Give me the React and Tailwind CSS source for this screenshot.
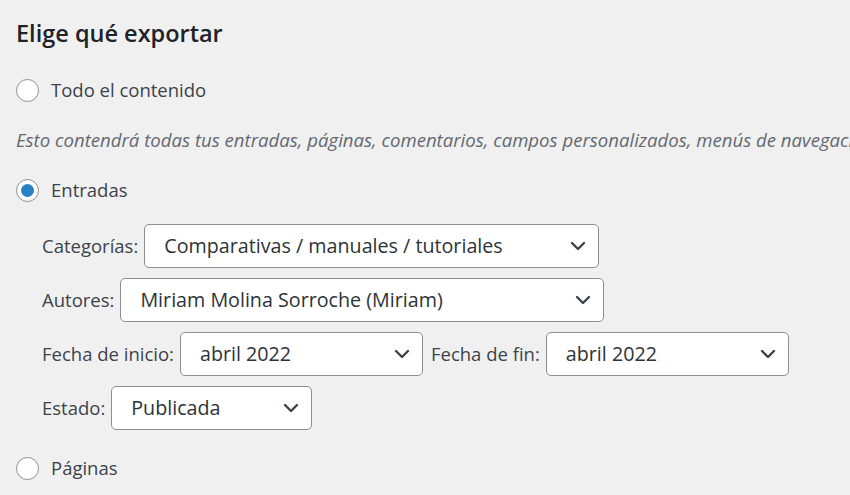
import React from "react";

function Chevron() {
  return (
    <svg width="16" height="10" viewBox="0 0 16 10" className="shrink-0">
      <path d="M2 2 L8 8 L14 2" fill="none" stroke="#3c434a" strokeWidth="2.4" strokeLinecap="round" strokeLinejoin="round" />
    </svg>
  );
}

function Radio({ checked, label }) {
  return (
    <label className="flex items-center gap-[12px] text-[18.5px] leading-[26px] text-[#3c434a]">
      <span className="w-[23px] h-[23px] rounded-full border border-[#8c8f94] bg-white flex items-center justify-center shrink-0">
        {checked && <span className="w-[13px] h-[13px] rounded-full bg-[#2682c4]" />}
      </span>
      {label}
    </label>
  );
}

function Select({ value, width }) {
  return (
    <div className={`h-[44px] ${width} bg-white border border-[#8c8f94] rounded-[5px] flex items-center justify-between pl-[19px] pr-[12px] text-[19.7px] text-[#2c3338]`}>
      <span className="whitespace-nowrap">{value}</span>
      <Chevron />
    </div>
  );
}

function Field({ label, children }) {
  return (
    <div className="flex items-center gap-[6px]">
      <span className="text-[18.5px] text-[#3c434a] whitespace-nowrap">{label}</span>
      {children}
    </div>
  );
}

export default function App() {
  return (
    <div className="w-[850px] h-[495px] overflow-hidden bg-[#f0f0f1] pl-[16px] pt-[17px]" style={{ fontFamily: '"Open Sans", "Noto Sans", sans-serif' }}>
      <h2 className="text-[23.5px] font-semibold text-[#1d2327] leading-[32px]">Elige qué exportar</h2>

      <div className="mt-[28px]">
        <Radio label="Todo el contenido" />
      </div>

      <p className="mt-[24px] italic text-[18.6px] leading-[26px] text-[#646970] whitespace-nowrap">
        Esto contendrá todas tus entradas, páginas, comentarios, campos personalizados, menús de navegación y entradas personalizadas.
      </p>

      <div className="mt-[24px]">
        <Radio checked label="Entradas" />
      </div>

      <div className="mt-[21px] pl-[26px] flex flex-col gap-[10px]">
        <Field label="Categorías:">
          <Select value="Comparativas / manuales / tutoriales" width="w-[455px]" />
        </Field>
        <Field label="Autores:">
          <Select value="Miriam Molina Sorroche (Miriam)" width="w-[484px]" />
        </Field>
        <div className="flex items-center gap-[8px]">
          <Field label="Fecha de inicio:">
            <Select value="abril 2022" width="w-[243px]" />
          </Field>
          <Field label="Fecha de fin:">
            <Select value="abril 2022" width="w-[243px]" />
          </Field>
        </div>
        <Field label="Estado:">
          <Select value="Publicada" width="w-[201px]" />
        </Field>
      </div>

      <div className="mt-[25px]">
        <Radio label="Páginas" />
      </div>
    </div>
  );
}
